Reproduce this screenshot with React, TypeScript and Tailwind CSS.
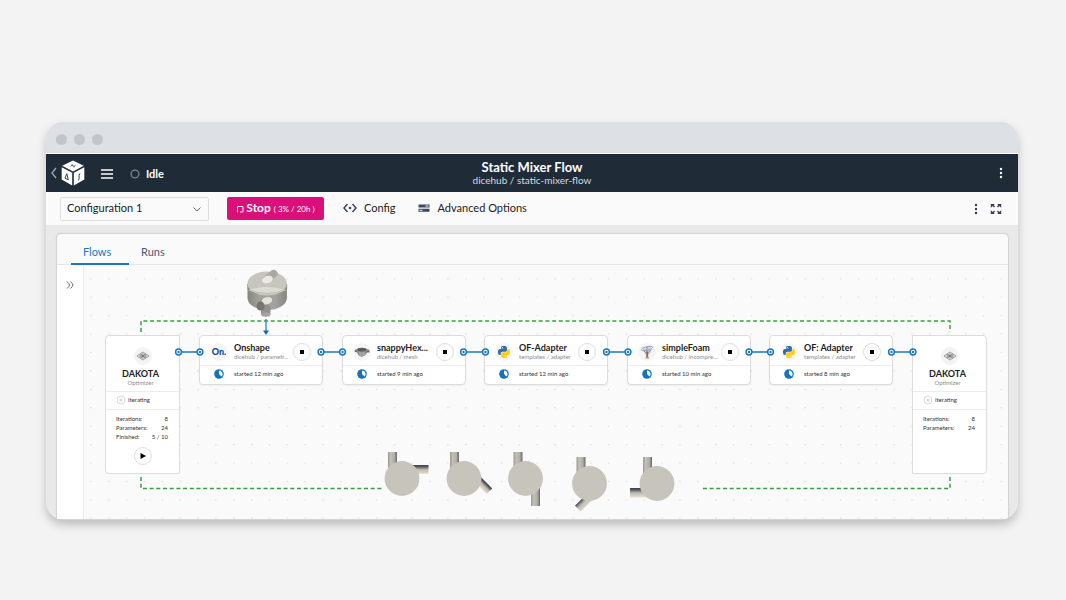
import { useState, type ReactNode } from "react";

type Step = {
  name: string;
  source: string;
  started: string;
  icon: ReactNode;
  place: string;
};

function PythonIcon() {
  return (
    <svg viewBox="0 0 24 24" className="w-3 h-3">
      <path fill="#2f6fa8" d="M14.25.18l.9.2.73.26.59.3.45.32.34.34.25.34.16.33.1.3.04.26.02.2-.01.13V8.5l-.05.63-.13.55-.21.46-.26.38-.3.31-.33.25-.35.19-.35.14-.33.1-.3.07-.26.04-.21.02H8.77l-.69.05-.59.14-.5.22-.41.27-.33.32-.27.35-.2.36-.15.37-.1.35-.07.32-.04.27-.02.21v3.06H3.17l-.21-.03-.28-.07-.32-.12-.35-.18-.36-.26-.36-.36-.35-.46-.32-.59-.28-.73-.21-.88-.14-1.05-.05-1.23.06-1.22.16-1.04.24-.87.32-.71.36-.57.4-.44.42-.33.42-.24.4-.16.36-.1.32-.05.24-.01h.16l.06.01h8.16v-.83H6.18l-.01-2.75-.02-.37.05-.34.11-.31.17-.28.25-.26.31-.23.38-.2.44-.18.51-.15.58-.12.64-.1.71-.06.77-.04.84-.02 1.27.05zm-6.3 1.98l-.23.33-.08.41.08.41.23.34.33.22.41.09.41-.09.33-.22.23-.34.08-.41-.08-.41-.23-.33-.33-.22-.41-.09-.41.09z" />
      <path fill="#ffcb1f" d="M21.1 6.11l.28.06.32.12.35.18.36.27.36.35.35.47.32.59.28.73.21.88.14 1.04.05 1.23-.06 1.23-.16 1.04-.24.86-.32.71-.36.57-.4.45-.42.33-.42.24-.4.16-.36.09-.32.05-.24.02-.16-.01h-8.22v.82h5.84l.01 2.76.02.36-.05.34-.11.31-.17.29-.25.25-.31.24-.38.2-.44.17-.51.15-.58.13-.64.09-.71.07-.77.04-.84.01-1.27-.04-1.07-.14-.9-.2-.73-.25-.59-.3-.45-.33-.34-.34-.25-.34-.16-.33-.1-.3-.04-.25-.02-.2.01-.13v-5.34l.05-.64.13-.54.21-.46.26-.38.3-.32.33-.24.35-.2.35-.14.33-.1.3-.06.26-.04.21-.02.13-.01h5.84l.69-.05.59-.14.5-.21.41-.28.33-.32.27-.35.2-.36.15-.36.1-.35.07-.32.04-.28.02-.21V6.07h2.09l.14.01zm-6.47 14.25l-.23.33-.08.41.08.41.23.33.33.23.41.08.41-.08.33-.23.23-.33.08-.41-.08-.41-.23-.33-.33-.23-.41-.08-.41.08z" />
    </svg>
  );
}

function SnappyIcon() {
  return (
    <svg viewBox="0 0 18 18" className="w-[18px] h-[18px]">
      <path d="M1.500 7l4-1.500h7l4 1.500v2.600l-2.500.2-2.200 2.800-3.300 1.300-3.200-1.800-1.300-2.800-2.300-.8z" fill="#8a8a8a" />
      <ellipse cx="8.800" cy="6.600" rx="4.600" ry="1.900" fill="#5c5c5c" />
      <path d="M5.500 8.400q3.300 1.500 6.600 0l-.8 4-2.700 1.300-2.200-1.500z" fill="#a3a3a3" />
      <path d="M2 8l2 1M14 8.600l2-.4" stroke="#555" strokeWidth=".8" />
    </svg>
  );
}

function FoamIcon() {
  return (
    <svg viewBox="0 0 18 18" className="w-[18px] h-[18px]">
      <path d="M4 5l8-2.500 2 4-2 4.500-4 1-3-4z" fill="#cfd3e0" />
      <ellipse cx="9" cy="5.500" rx="5.800" ry="1.800" fill="none" stroke="#8d97b8" strokeWidth=".8" transform="rotate(-12 9 5.500)" />
      <path d="M5.500 7.500l3.200 3M12.500 7l-3 3.500M9 4v6" stroke="#9a8f9c" strokeWidth="1" />
      <path d="M8.200 8.500h2v6h-2z" fill="#8a6a5e" />
      <path d="M7.500 14.200h3.400v1.300H7.500z" fill="#b98d77" />
    </svg>
  );
}

const steps: Step[] = [
  { name: "Onshape", source: "dicehub / parametr...", started: "started 12 min ago", icon: <span className="text-[9px] leading-3 font-black text-[#0b4a9e]">On.</span>, place: "left-[115px]" },
  { name: "snappyHex...", source: "dicehub / mesh", started: "started 9 min ago", icon: <SnappyIcon />, place: "left-[258px]" },
  { name: "OF-Adapter", source: "templates / adapter", started: "started 12 min ago", icon: <PythonIcon />, place: "left-[400px]" },
  { name: "simpleFoam", source: "dicehub / incompre...", started: "started 10 min ago", icon: <FoamIcon />, place: "left-[543px]" },
  { name: "OF: Adapter", source: "templates / adapter", started: "started 8 min ago", icon: <PythonIcon />, place: "left-[685px]" },
];

function StepCard({ step }: { step: Step }) {
  return (
    <article className={`absolute top-[70px] w-[124px] bg-white border border-[#dcdcdc] rounded shadow-xs ${step.place}`}>
      <div className="flex items-center h-[30px] pl-[10px] pr-[11px] pt-[2px] border-b border-[#ececec]">
        <div className="flex items-center justify-center size-[18px] shrink-0 rounded-full bg-[#f5f5f5]">{step.icon}</div>
        <div className="flex-1 min-w-0 ml-[6px] pb-[1px] whitespace-nowrap">
          <h3 className="text-[9px] leading-[11px] font-bold text-[#222]">{step.name}</h3>
          <p className="text-[6px] leading-2 text-[#8c8c8c]">{step.source}</p>
        </div>
        <button aria-label={`Stop ${step.name}`} className="flex items-center justify-center size-[18px] shrink-0 rounded-full border border-[#dedede] bg-white">
          <span className="size-1 bg-black" />
        </button>
      </div>
      <div className="flex items-center h-[18px] pl-[14px] pb-[2px]">
        <svg viewBox="0 0 10 10" className="size-[10px]">
          <circle cx="5" cy="5" r="4.800" fill="#1573bd" />
          <path d="M5 1.400V5l2.500 2.600A3.600 3.600 0 0 0 5 1.400z" fill="#fff" />
        </svg>
        <span className="ml-[10px] text-[6px] leading-2 text-[#333]">{step.started}</span>
      </div>
    </article>
  );
}

function OptimizerCard({ rows, running, shape }: { rows: [string, string][]; running?: boolean; shape: string }) {
  return (
    <article className={`absolute top-[70px] w-[75px] h-[139px] bg-white border border-[#dcdcdc] ${shape}`}>
      <div className="h-14 pt-[11px] border-b border-[#ececec] text-center">
        <div className="flex items-center justify-center size-[18px] mx-auto rounded-full bg-[#f3f3f3]">
          <svg viewBox="0 0 14 10" className="w-[14px] h-[10px]" fill="none" stroke="#777" strokeWidth=".7">
            <path d="M1 5l6-4 6 4-6 4z" />
            <path d="M3.500 5L7 2.700 10.500 5 7 7.300zM4 3l6 4M10 3L4 7" />
            <path d="M5.500 5L7 4l1.500 1L7 6z" fill="#666" />
          </svg>
        </div>
        <div className="pt-[3px] pr-1">
          <h3 className="text-[9px] leading-[11px] font-bold text-[#222]">DAKOTA</h3>
          <p className="text-[6px] leading-2 text-[#8c8c8c]">Optimizer</p>
        </div>
      </div>
      <div className="flex items-center gap-[2px] h-[18px] pl-[10px] pb-[2px] border-b border-[#ececec]">
        <svg viewBox="0 0 10 10" className="size-[10px]" fill="none" stroke="#d8d8d8">
          <circle cx="5" cy="5" r="4" />
          <circle cx="5" cy="5" r="1.500" fill="#d8d8d8" stroke="none" />
        </svg>
        <span className="text-[6px] leading-2 text-[#333]">iterating</span>
      </div>
      <dl className="pt-1 pl-[10px] pr-[11px]">
        {rows.map(([label, value]) => (
          <div key={label} className="flex justify-between text-[6px] leading-[9px] text-[#333]">
            <dt>{label}</dt>
            <dd>{value}</dd>
          </div>
        ))}
      </dl>
      {running && (
        <button aria-label="Run optimizer" className="flex items-center justify-center size-[18px] mt-[6px] mx-auto rounded-full border border-[#dedede]">
          <svg viewBox="0 0 6 6" className="size-[6px]"><path d="M.5 0v6L6 3z" fill="#000" /></svg>
        </button>
      )}
    </article>
  );
}

// x, y: centre of the disc; inlet: left edge of the upper pipe from that centre
const mixers = [
  { x: 402, y: 478.5, inlet: -14, outlet: <rect x="8" y="-13.500" width="18.500" height="9" fill="url(#outlet)" /> },
  { x: 464, y: 478.5, inlet: -14, outlet: <rect x="8" y="-13" width="19" height="8" fill="url(#outlet)" transform="rotate(45)" /> },
  { x: 525.5, y: 478.5, inlet: -12, outlet: <rect x="5.500" y="8" width="9" height="19.500" fill="url(#inlet)" /> },
  { x: 589.5, y: 483.5, inlet: -13, outlet: <rect x="8" y="-13.500" width="18" height="8" fill="url(#outletFlipped)" transform="rotate(135)" /> },
  { x: 657, y: 483.5, inlet: -14, outlet: <rect x="-27" y="4.500" width="20" height="9.500" fill="url(#outlet)" /> },
];

function CanvasDrawing() {
  return (
    <svg viewBox="84 265 924 254" className="absolute left-0 top-0 w-[924px] h-[254px]">
      <defs>
        <pattern id="dots" x="90.300" y="278.200" width="17.850" height="18.420" patternUnits="userSpaceOnUse">
          <rect width="1.300" height="1.300" fill="#dadada" />
        </pattern>
        <linearGradient id="inlet">
          <stop offset="0" stopColor="#9a9890" />
          <stop offset=".3" stopColor="#c4c1b8" />
          <stop offset=".7" stopColor="#b0aea7" />
          <stop offset="1" stopColor="#66666a" />
        </linearGradient>
        <linearGradient id="outlet" x1="0" y1="0" x2="0" y2="1">
          <stop offset="0" stopColor="#3c3e46" />
          <stop offset=".2" stopColor="#5a5c60" />
          <stop offset=".5" stopColor="#bbb7ad" />
          <stop offset="1" stopColor="#e9e2d5" />
        </linearGradient>
        <linearGradient id="outletFlipped" x1="0" y1="1" x2="0" y2="0">
          <stop offset="0" stopColor="#3c3e46" />
          <stop offset=".25" stopColor="#8b8a86" />
          <stop offset=".5" stopColor="#c3bfb5" />
          <stop offset="1" stopColor="#d9d3c6" />
        </linearGradient>
        <linearGradient id="drum">
          <stop offset="0" stopColor="#85857f" />
          <stop offset=".3" stopColor="#a3a29d" />
          <stop offset=".7" stopColor="#a3a29d" />
          <stop offset="1" stopColor="#858580" />
        </linearGradient>
      </defs>
      <rect x="84" y="265" width="924" height="254" fill="url(#dots)" />

      {/* optimizer loop */}
      <g fill="none" stroke="#3c9d45" strokeWidth="1.500" strokeDasharray="4 2.700">
        <path d="M141 332v-11H950v11" />
        <path d="M141 477v11.500H384" />
        <path d="M950 477v11.500H702" />
      </g>

      {/* geometry preview above Onshape */}
      <path d="M247.500 284v14a19.700 12 0 0 0 39.400 0v-14z" fill="url(#drum)" />
      <ellipse cx="267.200" cy="283.500" rx="19.700" ry="12" fill="#c6c5be" />
      <path d="M248 290q19-6 38.500 0q-19 8-38.500 0z" fill="#dddbd0" />
      <path d="M247.500 284v5q19.500 9 39.400 0v-5" fill="none" stroke="#777772" strokeWidth=".6" opacity=".5" />
      <path d="M262.500 278l9.500-8q5-1 6 4.500l-8 7.500z" fill="#a9a8a1" />
      <ellipse cx="267.500" cy="279.500" rx="5.500" ry="3.800" fill="#eae8df" transform="rotate(-20 267.500 279.500)" />
      <path d="M261 306h9.500v8q-4.700 4.500-9.500 0z" fill="#92918b" />
      <path d="M257.500 303l6-5 8 4-8 8q-5 0-6-7z" fill="#8f8e88" />
      <ellipse cx="266.800" cy="300.800" rx="5.500" ry="3.600" fill="#e5e2d8" transform="rotate(-15 266.800 300.800)" />
      <ellipse cx="260.500" cy="306" rx="4" ry="4.500" fill="#757470" />
      <ellipse cx="265.800" cy="314.500" rx="4.600" ry="2.200" fill="#a3a29c" />

      <path d="M266 319v12" stroke="#2b83c6" strokeWidth="1.300" />
      <path d="M263 330.500h6l-3 4.500z" fill="#1269b0" />

      {mixers.map((m) => (
        <g key={m.x} transform={`translate(${m.x} ${m.y})`}>
          <rect x={m.inlet} y="-26.500" width="9" height="18" fill="url(#inlet)" />
          {m.outlet}
          <circle r="17.400" fill="#c6c4bb" />
        </g>
      ))}
    </svg>
  );
}

const links = [[178.5, 200], [321, 342.5], [463.5, 485.5], [606.5, 628], [749, 770.5], [891.5, 913]];

function Links() {
  return (
    <svg viewBox="84 265 924 254" className="absolute left-0 top-0 w-[924px] h-[254px] pointer-events-none">
      {links.map(([from, to]) => (
        <g key={from} fill="#fff" stroke="#1a78c0" strokeWidth="1.500">
          <path d={`M${from} 352H${to}`} />
          {[from, to].map((x) => (
            <g key={x}>
              <circle cx={x} cy="352" r="2.900" />
              <circle cx={x} cy="352" r="1.200" fill="#1a78c0" stroke="none" />
            </g>
          ))}
        </g>
      ))}
    </svg>
  );
}

function MoreIcon() {
  return (
    <svg viewBox="0 0 4 12" className="w-1 h-3" fill="currentColor">
      <circle cx="2" cy="2" r="1.200" />
      <circle cx="2" cy="6" r="1.200" />
      <circle cx="2" cy="10" r="1.200" />
    </svg>
  );
}

function NavBar() {
  return (
    <header className="grid grid-cols-[1fr_auto_1fr] items-center h-[38px] px-[5px] bg-[#1f2b37] text-white">
      <div className="flex items-center">
        <button aria-label="Back">
          <svg viewBox="0 0 6 12" className="w-[6px] h-3" fill="none" stroke="#a2a8ae" strokeWidth="1.300"><path d="M5 1L1 6l4 5" /></svg>
        </button>
        <svg viewBox="0 0 24 26" className="w-6 h-[26px] ml-1">
          <path d="M12 .5l10.800 5.200L12 11.500 1.200 5.700z" fill="#fff" />
          <path d="M.7 7.200l10.500 5.500v12.800L.7 19.500z" fill="#fff" />
          <path d="M23.300 7.200l-10.500 5.500v12.800l10.500-6z" fill="#fff" />
          <path d="M9.500 6.300q1.200-1.500 2.500-.5t2.500-.5M10.500 4.900l1-.4M12.500 7.200l1-.4" fill="none" stroke="#1f2b37" strokeWidth=".8" />
          <path d="M4 18.200l1.800-4.500 1.500 6z" fill="none" stroke="#1f2b37" strokeWidth=".9" />
          <path d="M19.300 13.500q-1.200 0-1.200 2v3q0 1.500-1 1.800" fill="none" stroke="#1f2b37" strokeWidth=".9" />
        </svg>
        <button aria-label="Menu" className="ml-4 pt-[2px]">
          <svg viewBox="0 0 12 12" className="size-3" stroke="#fff" strokeWidth="1.500"><path d="M0 2h12M0 6h12M0 10h12" /></svg>
        </button>
        <span className="flex items-center gap-[6px] ml-[17px] pt-px text-[11px] leading-4 font-bold">
          <svg viewBox="0 0 10 10" className="size-[10px]" fill="none" stroke="#808890" strokeWidth="1.300"><circle cx="5" cy="5" r="3.900" /></svg>
          Idle
        </span>
      </div>
      <div className="text-center">
        <h1 className="text-[13px] leading-[15px] font-bold">Static Mixer Flow</h1>
        <p className="text-[10px] leading-[11px] text-[#d8dce0]">dicehub / static-mixer-flow</p>
      </div>
      <button aria-label="More" className="justify-self-end mr-[10px]"><MoreIcon /></button>
    </header>
  );
}

function Toolbar() {
  return (
    <div className="flex items-center h-[33px] pl-[14px] pr-4 bg-[#fafafa] text-[11px] leading-4 text-[#222]">
      <div className="relative">
        <select aria-label="Configuration" className="appearance-none block w-[149px] h-6 pl-[6px] pb-px border border-[#dedede] rounded-xs bg-[#fafafa]">
          <option>Configuration 1</option>
        </select>
        <svg viewBox="0 0 8 5" className="absolute right-2 top-[10px] w-2 h-[5px] pointer-events-none" fill="none" stroke="#666"><path d="M.5.5L4 4 7.500.5" /></svg>
      </div>
      <button className="flex items-center justify-center w-[97px] h-[23px] ml-[18px] rounded-xs bg-[#d90f7a] text-white">
        <svg viewBox="0 0 8 8" className="size-2" fill="none" stroke="#fff" strokeWidth="1"><path d="M2 7H1.500V2q0-.5.500-.5h4.500q.5 0 .5.5v4.500q0 .5-.5.500H4" /></svg>
        <span className="ml-[2px] pb-px text-xs font-bold">Stop</span>
        <span className="ml-[3px] text-[8px] leading-4">( 3% / 20h )</span>
      </button>
      <button className="flex items-center gap-[7px] ml-[19px] pb-px">
        <svg viewBox="0 0 14 10" className="w-[14px] h-[10px]" fill="none" stroke="#3d4663" strokeWidth="1.500">
          <path d="M4.500 1L1 5l3.500 4M9.500 1L13 5 9.500 9" />
          <circle cx="7" cy="5" r="1.300" fill="#3d4663" stroke="none" />
        </svg>
        Config
      </button>
      <button className="flex items-center gap-2 ml-[22px] pb-px">
        <svg viewBox="0 0 12 8" className="w-3 h-2">
          <path d="M.5.5h11v3H.5zM.5 4.700h11v3H.5z" fill="#3d4663" />
          <path d="M7.500 1.500h3v1h-3zM1.500 5.700h3v1h-3z" fill="#fafafa" />
        </svg>
        Advanced Options
      </button>
      <button aria-label="More actions" className="ml-auto text-[#343b55]"><MoreIcon /></button>
      <button aria-label="Full screen" className="ml-3">
        <svg viewBox="0 0 12 12" className="size-3">
          <path d="M.8 1h4L3.700 2.100l1.300 1.300-1 1-1.300-1.300L.8 4.700zM11.200 1h-4l1.100 1.100L7 3.400l1 1 1.300-1.300 1.900 1.600zM.8 11h4L3.700 9.900 5 8.600l-1-1-1.300 1.300L.8 7.300zM11.200 11h-4l1.100-1.100L7 8.600l1-1 1.300 1.300 1.900-1.600z" fill="#343b55" />
        </svg>
      </button>
    </div>
  );
}

export default function App() {
  const [tab, setTab] = useState("Flows");

  return (
    <main className="min-h-screen pt-[122px] pl-[46px] pr-12 bg-[#f3f3f3] font-['Lato',sans-serif]">
      <div className="rounded-[18px] overflow-hidden bg-[#e9e9e9] shadow-[0_5px_10px_rgba(0,0,0,0.22)]">
        <div className="flex items-center gap-[7px] h-8 pl-[10px] pt-1 border-b border-white bg-[#dde0e5]">
          <span className="size-[11px] rounded-full bg-[#c1c5cd]" />
          <span className="size-[11px] rounded-full bg-[#c1c5cd]" />
          <span className="size-[11px] rounded-full bg-[#c1c5cd]" />
        </div>
        <NavBar />
        <Toolbar />
        <div className="pt-[9px] pb-px pl-[11px] pr-[10px]">
          <section className="rounded-t-sm bg-[#fafafa] shadow-[0_0_2px_rgba(0,0,0,0.35)]">
            <div role="tablist" className="flex h-[31px] pl-[14px] border-b border-[#e6e6e6] text-[11px]">
              {["Flows", "Runs"].map((name) => (
                <button
                  key={name}
                  role="tab"
                  aria-selected={tab === name}
                  onClick={() => setTab(name)}
                  className={`min-w-[58px] pl-3 pt-[7px] h-[31px] text-left border-b-2 ${tab === name ? "border-[#1a78c0] text-[#1a78c0]" : "border-transparent text-[#4d5570]"}`}
                >
                  {name}
                </button>
              ))}
            </div>
            <div className="flex h-[254px]">
              <aside className="w-[27px] shrink-0 pt-4 bg-white border-r border-[#ececec]">
                <button aria-label="Expand sidebar" className="block mx-auto">
                  <svg viewBox="0 0 8 8" className="size-2" fill="none" stroke="#666"><path d="M1 .5Q3.500 3 3.500 4T1 7.500M4.500.5Q7 3 7 4T4.500 7.500" /></svg>
                </button>
              </aside>
              <div className="relative flex-1 overflow-hidden">
                <CanvasDrawing />
                <OptimizerCard running shape="left-[21px] rounded-l" rows={[["Iterations:", "8"], ["Parameters:", "24"], ["Finished:", "5 / 10"]]} />
                {steps.map((s) => <StepCard key={s.place} step={s} />)}
                <OptimizerCard shape="left-[828px] rounded-r" rows={[["Iterations:", "8"], ["Parameters:", "24"]]} />
                <Links />
              </div>
            </div>
          </section>
        </div>
      </div>
    </main>
  );
}
